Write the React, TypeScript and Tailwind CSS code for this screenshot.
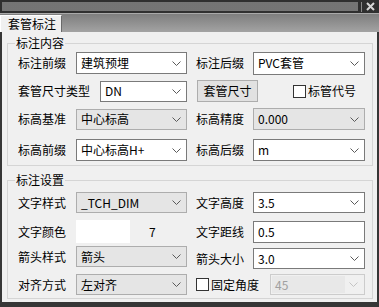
import React from 'react';

function Chevron({ light = false }: { light?: boolean }) {
  return (
    <svg width="9" height="5" viewBox="0 0 9 5" className="shrink-0">
      <polyline points="0.5,0.5 4.5,4.5 8.5,0.5" fill="none" stroke={light ? '#c4c4c4' : '#5a5a5a'} strokeWidth="1" />
    </svg>
  );
}

function Combo({ value, className = '', gray = false }: { value: string; className?: string; gray?: boolean }) {
  return (
    <div
      className={`flex items-center justify-between border pl-[4px] pr-[5px] ${
        gray ? 'border-[#adadad] bg-[#e5e5e5]' : 'border-[#7a7a7a] bg-white'
      } ${className}`}
    >
      <span className="leading-[14px] whitespace-nowrap">{value}</span>
      <Chevron />
    </div>
  );
}

function Label({ text, className = '' }: { text: string; className?: string }) {
  return <span className={`shrink-0 leading-[14px] whitespace-nowrap ${className}`}>{text}</span>;
}

function CheckBox() {
  return <div className="w-[13px] h-[13px] shrink-0 border border-[#333333] bg-white" />;
}

function Group({ title, children, className = '' }: { title: string; children: React.ReactNode; className?: string }) {
  return (
    <fieldset className={`ml-[5px] w-[366px] border border-[#d5d5d5] ${className}`}>
      <legend className="ml-[7px] px-[1px] text-[12px] leading-[14px]">{title}</legend>
      <div className="pl-[10px] flex flex-col">{children}</div>
    </fieldset>
  );
}

export default function App() {
  return (
    <div className="w-[379px] h-[307px] bg-[#363636] flex flex-col text-[12px] text-black font-['Noto_Sans_CJK_SC','Noto_Sans',sans-serif]">
      {/* title bar */}
      <div className="h-[13px] flex items-center bg-[#2f2f2f]">
        <div className="ml-[2px] h-[9px] flex-1 bg-[radial-gradient(circle,#7a7a7a_0.7px,transparent_0.8px)] bg-[length:2px_2px]" />
        <div className="ml-[3px] w-[1px] h-[10px] bg-[#8a8a8a]" />
        <div className="w-[17px] flex items-center justify-center">
          <svg width="9" height="9" viewBox="0 0 9 9">
            <path d="M1 1 L8 8 M8 1 L1 8" stroke="#d6d6d6" strokeWidth="2" />
          </svg>
        </div>
      </div>

      {/* tab strip */}
      <div className="h-[19px] flex items-end border-t border-[#a9a9a9] bg-[linear-gradient(#7e7e7e,#a3a3a3)]">
        <div className="w-[62px] h-[17px] flex items-center pl-[7px] bg-[#f0f0f0] border-t border-l border-white border-r border-r-[#6a6a6a] leading-[14px]">
          套管标注
        </div>
      </div>

      {/* content */}
      <div className="mx-[2px] h-[270px] bg-[#f0f0f0] flex flex-col">
        <Group title="标注内容" className="mt-[4px]">
          <div className="mt-[2px] h-[22px] flex items-center">
            <div className="w-[169px] flex items-center">
              <Label text="标注前缀" className="w-[58px]" />
              <Combo value="建筑预埋" className="w-[111px] h-[22px]" />
            </div>
            <div className="ml-[9px] flex items-center">
              <Label text="标注后缀" className="w-[57px]" />
              <Combo value="PVC套管" className="w-[112px] h-[23px]" />
            </div>
          </div>

          <div className="mt-[6px] h-[22px] flex items-center">
            <div className="w-[169px] flex items-center">
              <Label text="套管尺寸类型" className="w-[82px]" />
              <Combo value="DN" className="w-[87px] h-[21px]" />
            </div>
            <div className="ml-[10px] w-[61px] h-[22px] flex items-center justify-center border border-[#adadad] bg-[#e1e1e1] leading-[14px]">
              套管尺寸
            </div>
            <div className="ml-[35px] flex items-center gap-[2px]">
              <CheckBox />
              <Label text="标管代号" />
            </div>
          </div>

          <div className="mt-[6px] h-[22px] flex items-center">
            <div className="w-[169px] flex items-center">
              <Label text="标高基准" className="w-[58px]" />
              <Combo value="中心标高" gray className="w-[111px] h-[21px]" />
            </div>
            <div className="ml-[9px] flex items-center">
              <Label text="标高精度" className="w-[57px]" />
              <Combo value="0.000" gray className="w-[112px] h-[22px]" />
            </div>
          </div>

          <div className="mt-[9px] mb-[4px] h-[22px] flex items-center">
            <div className="w-[169px] flex items-center">
              <Label text="标高前缀" className="w-[58px]" />
              <Combo value="中心标高H+" className="w-[111px] h-[22px]" />
            </div>
            <div className="ml-[9px] flex items-center">
              <Label text="标高后缀" className="w-[57px]" />
              <Combo value="m" className="w-[112px] h-[22px]" />
            </div>
          </div>
        </Group>

        <Group title="标注设置" className="mt-[7px]">
          <div className="mt-[5px] h-[21px] flex items-center">
            <div className="w-[169px] flex items-center">
              <Label text="文字样式" className="w-[58px]" />
              <Combo value="_TCH_DIM" gray className="w-[111px] h-[21px]" />
            </div>
            <div className="ml-[9px] flex items-center">
              <Label text="文字高度" className="w-[57px]" />
              <Combo value="3.5" className="w-[112px] h-[21px]" />
            </div>
          </div>

          <div className="mt-[7px] h-[23px] flex items-center">
            <div className="w-[169px] flex items-center">
              <Label text="文字颜色" className="w-[58px]" />
              <div className="w-[54px] h-[23px] bg-white" />
              <span className="ml-[19px] leading-[14px]">7</span>
            </div>
            <div className="ml-[9px] flex items-center">
              <Label text="文字距线" className="w-[57px]" />
              <div className="w-[112px] h-[22px] flex items-center pl-[4px] border border-[#7a7a7a] bg-white leading-[14px]">
                0.5
              </div>
            </div>
          </div>

          <div className="mt-[3px] h-[23px] flex items-start">
            <div className="w-[169px] flex items-center">
              <Label text="箭头样式" className="w-[58px]" />
              <Combo value="箭头" gray className="w-[111px] h-[21px]" />
            </div>
            <div className="ml-[9px] mt-[2px] flex items-center">
              <Label text="箭头大小" className="w-[57px]" />
              <Combo value="3.0" className="w-[112px] h-[21px]" />
            </div>
          </div>

          <div className="mt-[5px] mb-[3px] h-[21px] flex items-center">
            <div className="w-[169px] flex items-center">
              <Label text="对齐方式" className="w-[58px]" />
              <Combo value="左对齐" gray className="w-[111px] h-[21px]" />
            </div>
            <div className="ml-[9px] flex items-center">
              <CheckBox />
              <Label text="固定角度" className="ml-[2px]" />
              <div className="ml-[11px] w-[95px] h-[21px] flex items-center justify-between border border-[#cccccc] bg-[#f0f0f0] pr-[6px]">
                <div className="ml-[1px] w-[73px] h-[17px] flex items-center pl-[3px] bg-[#e8e8e8] text-[#a0a0a0] leading-[14px]">
                  45
                </div>
                <Chevron light />
              </div>
            </div>
          </div>
        </Group>
      </div>
    </div>
  );
}
